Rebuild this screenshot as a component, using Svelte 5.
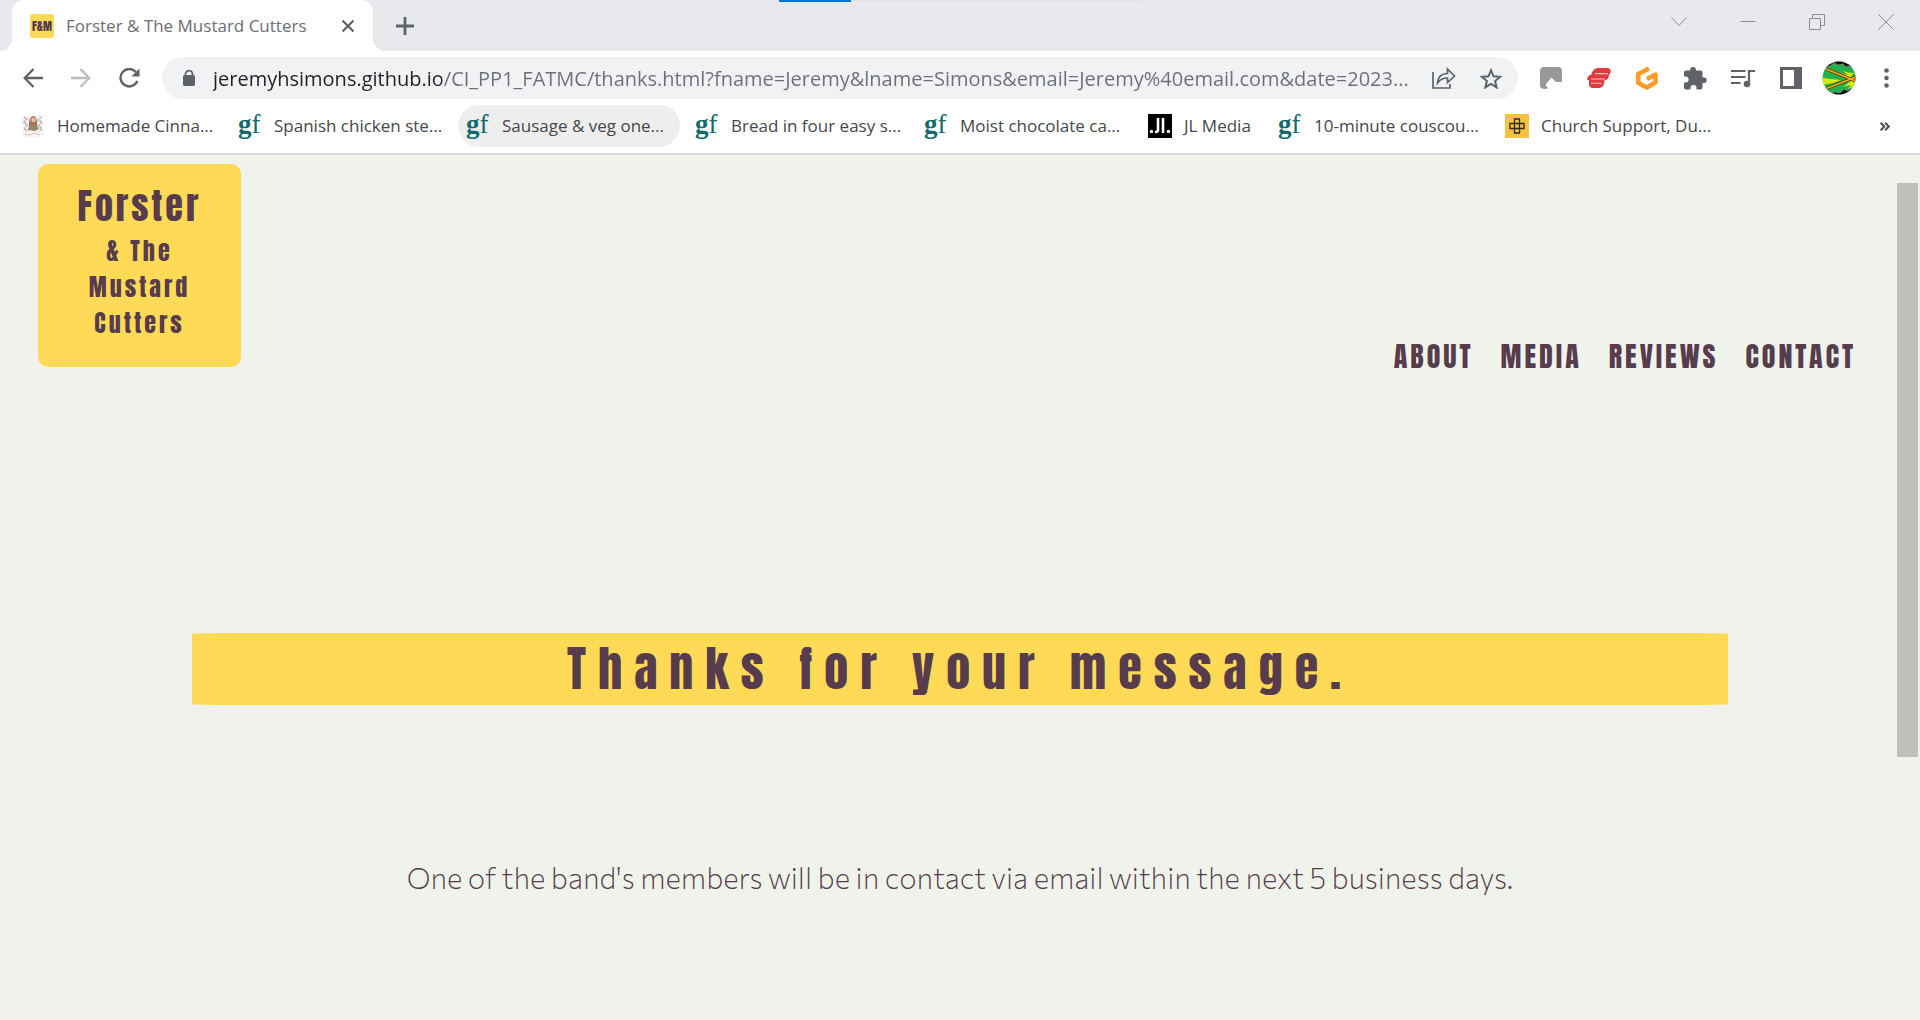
<script>
  const bookmarks = [
    { label: 'Homemade Cinna...', icon: 'photo', width: 210 },
    { label: 'Spanish chicken ste...', icon: 'gf', width: 221 },
    { label: 'Sausage & veg one...', icon: 'gf', width: 222, active: true },
    { label: 'Bread in four easy s...', icon: 'gf', width: 222 },
    { label: 'Moist chocolate ca...', icon: 'gf', width: 217 },
    { label: 'JL Media', icon: 'jl', width: 123 },
    { label: '10-minute couscou...', icon: 'gf', width: 220 },
    { label: 'Church Support, Du...', icon: 'church', width: 221 }
  ];
  const links = ['About', 'Media', 'Reviews', 'Contact'];
  let address = $state(
    'jeremyhsimons.github.io/CI_PP1_FATMC/thanks.html?fname=Jeremy&lname=Simons&email=Jeremy%40email.com&date=2023...'
  );
</script>

<div class="window">
  <header class="chrome">
    <div class="tabstrip">
      <div class="tab">
        <span class="favicon">F&amp;M</span>
        <span class="tab-title">Forster &amp; The Mustard Cutters</span>
        <button class="tab-close" aria-label="Close tab">
          <svg width="14" height="14" viewBox="0 0 14 14"><path d="M1.5 1.5l11 11M12.500 1.500l-11 11" stroke="#5f6368" stroke-width="2.200" /></svg>
        </button>
      </div>
      <button class="new-tab" aria-label="New tab">
        <svg width="18" height="18" viewBox="0 0 18 18"><path d="M9 0v18M0 9h18" stroke="#5f6368" stroke-width="2.800" /></svg>
      </button>
      <div class="caption">
        <button aria-label="Search tabs"><svg width="16" height="16" viewBox="0 0 16 16"><path d="M.5 3.500L8 11.500l7.500-8" /></svg></button>
        <button aria-label="Minimise"><svg width="16" height="16" viewBox="0 0 16 16"><path d="M.5 7.500h15" /></svg></button>
        <button aria-label="Restore"><svg width="16" height="16" viewBox="0 0 16 16"><path d="M.5 4.500h11v11H.5zM3.500 4.500v-4h12v11h-4" /></svg></button>
        <button aria-label="Close"><svg width="16" height="16" viewBox="0 0 16 16"><path d="M.5.5l15 15M15.500.5l-15 15" /></svg></button>
      </div>
      <div class="progress"></div>
    </div>

    <div class="toolbar">
      <div class="history">
        <button aria-label="Back"><svg width="20" height="20" viewBox="0 0 20 20" fill="none" stroke="#5f6368" stroke-width="2.300"><path d="M20 10H2M10.500 1L1.700 10l8.800 9" /></svg></button>
        <button aria-label="Forward"><svg width="20" height="20" viewBox="0 0 20 20" fill="none" stroke="#bbbdbf" stroke-width="2.300"><path d="M0 10h18M9.500 1l8.800 9-8.800 9" /></svg></button>
        <button aria-label="Reload"><svg width="21" height="20" viewBox="0 0 21 20"><path d="M17 4.200A8.700 8.700 0 1 0 18.300 13" fill="none" stroke="#5f6368" stroke-width="2.400" /><path d="M20.500.5v8h-8z" fill="#5f6368" /></svg></button>
      </div>
      <div class="omnibox">
        <svg class="lock" width="14" height="16" viewBox="0 0 14 16"><path d="M3.500 7V4a3.500 3.500 0 0 1 7 0v3" fill="none" stroke="#5f6368" stroke-width="1.800" /><rect x="1" y="5" width="12" height="11" rx="1.500" fill="#5f6368" /></svg>
        <input aria-label="Address" bind:value={address} spellcheck="false" />
        <button aria-label="Share"><svg width="24" height="22" viewBox="0 0 24 22" fill="none" stroke="#5f6368" stroke-width="1.700"><path d="M1 5v16h17v-4M5.500 16c.5-6 4-9.500 10-9.500V2l7 7-7 6.500V11c-4.500 0-7.500 1.500-10 5z" /></svg></button>
        <button aria-label="Bookmark this page"><svg width="22" height="21" viewBox="0 0 22 21" fill="none" stroke="#5f6368" stroke-width="2"><path d="M11 2.300l2.500 6 6.500.6-4.900 4.200 1.500 6.300L11 16l-5.600 3.400 1.500-6.300L2 8.900l6.500-.6z" /></svg></button>
      </div>
      <div class="extensions">
        <button aria-label="Page marker"><svg width="22" height="22" viewBox="0 0 22 22"><path d="M4 0h14q4 0 4 4v11h-6l-4.500-4.500L6 17v2l2 2q-1 1-3 1-5 0-5-4V4q0-4 4-4z" fill="#999" /></svg></button>
        <button aria-label="VPN"><svg width="24" height="20" viewBox="0 0 24 20" fill="#e0393e"><path d="M11 0h9q4 0 3.700 4-.5 3.200-4 3.200H4Q6 0 11 0zM5 7h17q-.5 5-4 5H0q.5-4 3-5zM2 12h15.500q0 7.500-5 8H5q-4-.5-3-8z" /><path d="M8 5.600h13M4 11h14M4 15.200h11" stroke="#fff" stroke-width="1.100" opacity=".7" /></svg></button>
        <button aria-label="Grammar"><svg width="24" height="24" viewBox="0 0 24 24" fill="none" stroke="#ff9a24" stroke-width="4.500" stroke-linejoin="round"><path d="M14 2.600L3.300 8v9l8.500 4.500 8.700-5V8.500L12 13" /></svg></button>
        <button aria-label="Extensions"><svg width="23" height="23" viewBox="0 0 23 23" fill="#5f6368"><path d="M20 10.500h-1.500V5.500q0-2-2-2h-4.500V3a2.900 2.900 0 0 0-5.800 0v.5H2q-2 0-2 2v4h1.600a3 3 0 0 1 0 6H0v5Q0 22.500 2 22.500h4.500V21a3 3 0 0 1 6 0v1.500h4q2 0 2-2V16H20a2.700 2.700 0 0 0 0-5.500z" /></svg></button>
        <button aria-label="Media controls"><svg width="24" height="19" viewBox="0 0 24 19" fill="none" stroke="#5f6368" stroke-width="2.200"><path d="M0 2h14.500M0 8h14.500M0 14h9.500M18 15V2h6" /><circle cx="16" cy="15" r="3.300" fill="#5f6368" stroke="none" /></svg></button>
        <button aria-label="Side panel"><svg width="22" height="22" viewBox="0 0 22 22"><path fill-rule="evenodd" d="M0 0h22v22H0zM3 3v16h11V3z" fill="#5f6368" /></svg></button>
        <button aria-label="Profile">
          <svg width="34" height="34" viewBox="0 0 34 34"><clipPath id="disc"><circle cx="17" cy="17" r="16.500" /></clipPath><g clip-path="url(#disc)"><path d="M0 0h34v34H0z" fill="#22b14c" /><path d="M1 17l8 1 10 1-8 3-11 2zM19 12l12 4 4-2v10l-9 4 3-4-8 2 8-6zM21 10q5 2 11 2l-4 4z" fill="#d9e90c" /><path d="M0 0h34v8l-7-3-3 1-3-3-5 1-4-2-4 3-3 1-7 3zM0 34h34v-5l-6-1-2 2-4-2-4 4-5-1-4 1-5-4z" fill="#111" stroke="#887e86" stroke-width=".8" /><path d="M4 8l30 12M3 28l31-12" stroke="#563b12" stroke-width="3" /><path d="M4 8l30 12M3 28l31-12" stroke="#ffae16" stroke-width="1.500" /></g></svg>
        </button>
        <button aria-label="Menu"><svg width="5" height="20" viewBox="0 0 5 20" fill="#5f6368"><circle cx="2.500" cy="2.500" r="2.300" /><circle cx="2.500" cy="10" r="2.300" /><circle cx="2.500" cy="17.500" r="2.300" /></svg></button>
      </div>
    </div>

    <nav class="bookmarks" aria-label="Bookmarks">
      {#each bookmarks as mark}
        <a href="#bookmark" class:active={mark.active} style:width="{mark.width}px">
          {#if mark.icon === 'gf'}
            <span class="gf"><b>g</b>f</span>
          {:else if mark.icon === 'jl'}
            <svg width="24" height="24" viewBox="0 0 24 24"><path d="M0 0h24v24H0z" /><path d="M10 4v12q0 2-3 2M15 4v15" fill="none" stroke="#fff" stroke-width="2.600" /><circle cx="3.500" cy="17.500" r="1.700" fill="#fff" /><circle cx="20.500" cy="17.500" r="1.700" fill="#fff" /></svg>
          {:else if mark.icon === 'church'}
            <svg width="24" height="24" viewBox="0 0 24 24"><path d="M0 0h24v24H0z" fill="#f5c242" /><path d="M9.500 5h5v14h-5zM5 9.500h14v5H5z" fill="none" stroke="#30270d" stroke-width="1.300" /></svg>
          {:else}
            <svg width="24" height="24" viewBox="0 0 24 24"><path d="M1 1h22v22H1z" fill="#faf6f5" /><path d="M3 3l3 2-3 3 3 3-3 4 4 2M20 3l-3 3 4 2-3 4 3 3-3 2" fill="none" stroke="#b9bab5" stroke-width="2" stroke-dasharray="2 1" /><path d="M8 15Q7 2 13 2q4 2 3 13z" fill="#ad7360" /><circle cx="12.500" cy="6" r="2.300" fill="#e5bda5" /><path d="M7 16q0-5 5-5t6 4l-4 2z" fill="#8c8c68" /><path d="M4 20l5 1 4-2 6 2" fill="none" stroke="#e4bbb8" /></svg>
          {/if}
          <span class="label">{mark.label}</span>
        </a>
      {/each}
      <button class="more" aria-label="More bookmarks"><svg width="10" height="9" viewBox="0 0 10 9" fill="none" stroke="#4b4f54" stroke-width="2"><path d="M.7.7l3.600 3.800L.7 8.300M5.200.7l3.600 3.800-3.600 3.800" /></svg></button>
    </nav>
  </header>

  <div class="page">
    <div class="site-header">
      <a class="logo" href="#home"><span class="logo-main">Forster</span><span>&amp; The</span><span>Mustard</span><span>Cutters</span></a>
      <nav class="site-nav" aria-label="Main">
        {#each links as link}<a href="#{link.toLowerCase()}">{link}</a>{/each}
      </nav>
    </div>
    <main>
      <h1>Thanks for your message.</h1>
      <p>One of the band's members will be in contact via email within the next 5 business days.</p>
    </main>
    <div class="scroll-thumb"></div>
  </div>
</div>

<style>
  :global(body) { margin: 0; }
  * { box-sizing: border-box; }
  button { border: 0; padding: 0; background: none; display: flex; align-items: center; justify-content: center; }
  a { color: inherit; text-decoration: none; }
  svg { display: block; flex: none; }
  .window { min-height: 100vh; display: flex; flex-direction: column; font-family: 'Open Sans', sans-serif; }
  .chrome { background: #fff; border-bottom: 2px solid #d9dadc; }

  .tabstrip { position: relative; display: flex; height: 51px; padding-left: 12px; background: #e8e9ed; }
  .tab { position: relative; display: flex; align-items: center; width: 361px; padding: 0 18px; background: #fff; border-radius: 12px 12px 0 0; }
  .tab::before, .tab::after { content: ''; position: absolute; bottom: 0; width: 12px; height: 12px; }
  .tab::before { right: 100%; background: radial-gradient(circle at 0 0, #e8e9ed 12px, #fff 12px); }
  .tab::after { left: 100%; background: radial-gradient(circle at 100% 0, #e8e9ed 12px, #fff 12px); }
  .favicon { display: flex; align-items: center; justify-content: center; width: 24px; height: 24px; border-radius: 3px; background: #ffda57; color: #553a4a; font: 12px Anton, Impact, sans-serif; }
  .tab-title { flex: 1; margin-left: 12px; font-size: 17px; color: #6b6e73; white-space: nowrap; }
  .new-tab { width: 40px; margin-left: 12px; }
  .caption { display: flex; height: 43px; margin-left: auto; }
  .caption button { width: 69px; }
  .caption path { fill: none; stroke: #8c8d90; }
  .progress { position: absolute; top: 0; left: 779px; width: 362px; height: 2px; background: linear-gradient(90deg, #0078d7 20%, #e3e5e4 20%); }

  .toolbar { display: flex; align-items: center; height: 54px; padding-right: 20px; }
  .history { display: flex; gap: 28px; padding: 0 22px 0 23px; }
  .omnibox { flex: 1; display: flex; align-items: center; gap: 24px; height: 42px; padding: 0 16px 0 20px; border-radius: 21px; background: #f1f2f4; }
  .lock { margin-right: -7px; }
  input { flex: 1; min-width: 0; height: 42px; margin-right: -10px; padding: 0; border: 0; outline: 0; font: 20px 'Open Sans', sans-serif; color: transparent; background: linear-gradient(90deg, #202124 229px, #6c6f73 229px); -webkit-background-clip: text; background-clip: text; }
  .extensions { display: flex; align-items: center; padding-left: 9px; }
  .extensions button { width: 48px; height: 42px; }
  .extensions button:last-child { width: 46px; margin-right: -9px; }

  .bookmarks { display: flex; gap: 7px; height: 48px; padding: 0 30px 6px 13px; }
  .bookmarks a { display: flex; align-items: center; gap: 12px; padding: 0 8px; border-radius: 21px; font-size: 17px; line-height: 22px; color: #44474b; white-space: nowrap; }
  .bookmarks .label { padding-bottom: 1px; }
  .bookmarks .active { background: #eee; }
  .gf { flex: none; width: 24px; padding-bottom: 4px; font: 27px/24px 'Liberation Serif', serif; color: #14696a; }
  .more { margin-left: auto; }

  .page { position: relative; flex: 1; background: #eff3eb; color: #563c4c; }
  .site-header { display: flex; justify-content: space-between; align-items: flex-end; padding: 9px 64px 0 38px; font-family: Anton, Impact, 'Liberation Sans Narrow', sans-serif; }
  .logo { display: flex; flex-direction: column; align-items: center; width: 203px; height: 203px; padding-top: 15px; border-radius: 10px; background: #ffda57; font-size: 24px; line-height: 36px; letter-spacing: 3px; }
  .logo-main { font-size: 36px; line-height: 54px; }
  .site-nav { display: flex; gap: 27px; margin-bottom: -10px; font-size: 28px; line-height: 42px; letter-spacing: 3px; text-transform: uppercase; }
  main { text-align: center; }
  h1 { width: 80%; margin: 266px auto 0; border-radius: 50px / 1px; background: #ffda57; font: 48px/72px Anton, Impact, 'Liberation Sans Narrow', sans-serif; letter-spacing: 12px; }
  p { margin: 153px 24px 0; font-family: Commissioner, 'Open Sans', sans-serif; font-size: 29px; line-height: 40px; font-weight: 200; }
  .scroll-thumb { position: absolute; top: 28px; right: 2px; width: 21px; height: 574px; background: #bfc0bb; }
</style>
